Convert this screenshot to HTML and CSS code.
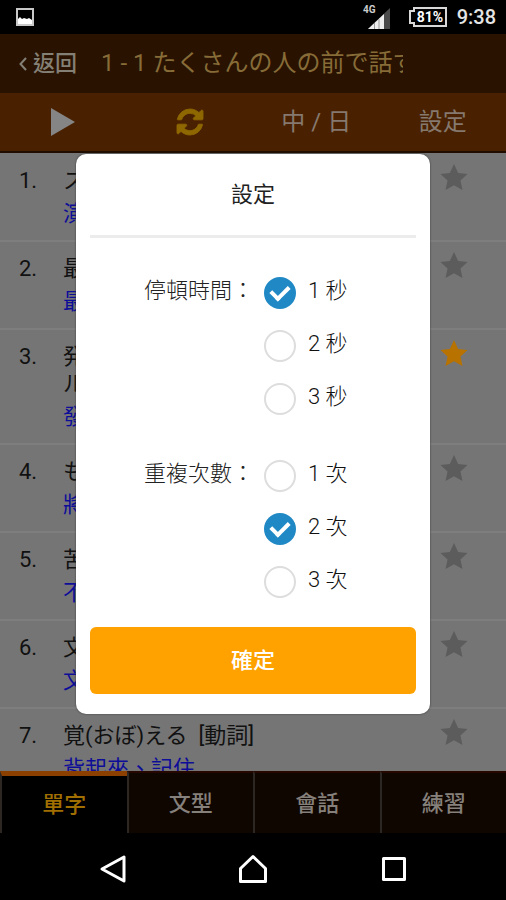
FILE: index.html
```html
<!DOCTYPE html>
<html lang="zh-Hant">
<head>
<meta charset="utf-8">
<meta name="viewport" content="width=device-width, initial-scale=1">
<title>設定</title>
<link rel="stylesheet" href="styles.css">
</head>
<body>
<svg class="sprite" aria-hidden="true">
  <symbol id="star" viewBox="0 0 28 28"><path d="M14 0 18.300 9.300 28 10.300 20.700 17 22.800 27 14 22 5.200 27 7.300 17 0 10.300 9.700 9.300Z"/></symbol>
</svg>
<div class="screen">
  <div class="status">
    <svg class="picture-icon" viewBox="0 0 18 18"><path d="M1 1h16v16H1z" fill="none" stroke="#c8c8c8" stroke-width="2"/><path d="M2 16v-5l2-2 2 2 2-1 3 1 2-1 3 2v4z" fill="#fff"/></svg>
    <div class="status-right">
      <svg class="signal" viewBox="0 0 28 26"><text x="0" y="9" class="net">4G</text><path d="M5 25 27 4v21z" fill="#4a4a4a"/><path d="M5 25 21 10v15z" fill="#eee"/><path d="M11.500 19v6M16 15v10" stroke="#999"/></svg>
      <svg class="battery" viewBox="0 0 38 20"><path d="M5 1h32v18H5v-3H1V4h4z" fill="none" stroke="#d8d8d8" stroke-width="2"/><text x="21" y="15" text-anchor="middle" class="level">81%</text></svg>
      <span class="clock">9:38</span>
    </div>
  </div>
  <header class="header">
    <button class="back" type="button"><svg viewBox="0 0 8 14"><path d="M7 1 1.500 7 7 13" fill="none" stroke="currentColor" stroke-width="2"/></svg>返回</button>
    <h1 class="title" lang="ja">1 - 1 たくさんの人の前で話す</h1>
  </header>
  <div class="toolbar">
    <button type="button" aria-label="播放"><svg class="play" viewBox="0 0 24 28"><path d="M0 0 24 14 0 28z" fill="#858585"/></svg></button>
    <button type="button" aria-label="重複"><svg class="repeat" viewBox="0 0 1536 1536"><path fill="#8e6700" stroke="#8e6700" stroke-width="50" d="M1511 928q0 5-1 7-64 268-268 434.500T764 1536q-146 0-282.500-55T238 1324l-129 129q-19 19-45 19t-45-19-19-45V960q0-26 19-45t45-19h448q26 0 45 19t19 45-19 45l-137 137q71 66 161 102t187 36q134 0 250-65t186-179q11-17 53-117 8-23 30-23h192q13 0 22.500 9.500t9.500 22.500zm25-800v448q0 26-19 45t-45 19h-448q-26 0-45-19t-19-45 19-45l138-138Q969 256 768 256q-134 0-250 65T332 500q-11 17-53 117-8 23-30 23H50q-13 0-22.500-9.500T18 608v-7q65-268 270-434.500T768 0q146 0 284 55.500T1297 212l130-129q19-19 45-19t45 19 19 45z"/></svg></button>
    <button type="button">中 / 日</button>
    <button type="button">設定</button>
  </div>
  <main class="content">
    <ol class="words">
      <li><span class="num">1.</span><div class="entry"><p lang="ja">スピーチ</p><p class="meaning">演講</p></div><button type="button" aria-label="收藏"><svg><use href="#star"/></svg></button></li>
      <li><span class="num">2.</span><div class="entry"><p lang="ja">最初</p><p class="meaning">最初</p></div><button type="button" aria-label="收藏"><svg><use href="#star"/></svg></button></li>
      <li><span class="num">3.</span><div class="entry"><p lang="ja">発表スキ<br>ル</p><p class="meaning">發表技巧</p></div><button type="button" class="on" aria-label="收藏"><svg><use href="#star"/></svg></button></li>
      <li><span class="num">4.</span><div class="entry"><p lang="ja">もうすぐ</p><p class="meaning">將要</p></div><button type="button" aria-label="收藏"><svg><use href="#star"/></svg></button></li>
      <li><span class="num">5.</span><div class="entry"><p lang="ja">苦手</p><p class="meaning">不擅長</p></div><button type="button" aria-label="收藏"><svg><use href="#star"/></svg></button></li>
      <li><span class="num">6.</span><div class="entry"><p lang="ja">文章</p><p class="meaning">文章</p></div><button type="button" aria-label="收藏"><svg><use href="#star"/></svg></button></li>
      <li><span class="num">7.</span><div class="entry"><p lang="ja">覚(おぼ)える&nbsp; [動詞]</p><p class="meaning">背起來、記住</p></div><button type="button" aria-label="收藏"><svg><use href="#star"/></svg></button></li>
    </ol>
  </main>
  <nav class="tabs">
    <a href="#words" class="active">單字</a><a href="#grammar">文型</a><a href="#talk">會話</a><a href="#practice">練習</a>
  </nav>
  <div class="system">
    <button type="button" aria-label="返回"><svg viewBox="0 0 28 30"><path d="M3 15 25 3v24z"/></svg></button>
    <button type="button" aria-label="主畫面"><svg viewBox="0 0 28 30"><path d="M1.500 27.500V14.500L14 2.500l12.500 12v13z"/></svg></button>
    <button type="button" aria-label="最近"><svg viewBox="0 0 28 30"><path d="M4.500 4.500h21v21h-21z"/></svg></button>
  </div>
  <form class="dialog" role="dialog" aria-labelledby="dialog-title">
    <h2 id="dialog-title">設定</h2>
    <div class="group" role="radiogroup" aria-labelledby="pause">
      <span class="group-name" id="pause">停頓時間：</span>
      <div class="options">
        <label><input type="radio" name="pause" checked><span>1 秒</span></label>
        <label><input type="radio" name="pause"><span>2 秒</span></label>
        <label><input type="radio" name="pause"><span>3 秒</span></label>
      </div>
    </div>
    <div class="group" role="radiogroup" aria-labelledby="times">
      <span class="group-name" id="times">重複次數：</span>
      <div class="options">
        <label><input type="radio" name="times"><span>1 次</span></label>
        <label><input type="radio" name="times" checked><span>2 次</span></label>
        <label><input type="radio" name="times"><span>3 次</span></label>
      </div>
    </div>
    <button class="confirm" type="button">確定</button>
  </form>
</div>
</body>
</html>
```
FILE: styles.css
```css
* { box-sizing: border-box; }
body {
  margin: 0;
  background: #000;
  font: 22px/27px Roboto, "Noto Sans CJK TC", sans-serif;
}
[lang="ja"] { font-family: Roboto, "Noto Sans CJK JP", sans-serif; }
h1, h2, p, ol { margin: 0; padding: 0; font-weight: 400; }
button {
  margin: 0;
  padding: 0;
  border: 0;
  background: none;
  color: inherit;
  font: inherit;
}
a { color: inherit; text-decoration: none; }
svg { display: block; }
.sprite { display: none; }
.screen {
  position: relative;
  display: flex;
  flex-direction: column;
  height: 100vh;
  overflow: hidden;
}

.status {
  display: flex;
  flex: none;
  align-items: center;
  justify-content: space-between;
  height: 34px;
  padding: 0 10px 0 16px;
  color: #e4e4e4;
}
.picture-icon { width: 18px; height: 18px; }
.status-right { display: flex; align-items: center; gap: 10px; }
.signal { width: 28px; height: 26px; margin-right: 8px; }
.battery { width: 38px; height: 20px; }
.net { fill: #ccc; font-size: 10px; font-weight: 700; }
.level { fill: #fff; font-size: 14px; font-weight: 700; }
.clock { font-size: 20px; font-weight: 500; }

.header {
  display: flex;
  flex: none;
  align-items: center;
  gap: 24px;
  height: 59px;
  padding-left: 19px;
  background: #291300;
}
.back {
  display: flex;
  align-items: center;
  gap: 6px;
  color: #858076;
  font-weight: 500;
}
.back svg { width: 8px; height: 14px; }
.title {
  width: 62%;
  overflow: hidden;
  color: #876c38;
  font-size: 24px;
  white-space: nowrap;
}

.toolbar {
  display: grid;
  flex: none;
  grid-template-columns: repeat(4, 1fr);
  height: 60px;
  border-bottom: 2px solid #200d00;
  background: #4a2100;
  color: #85796f;
  font-size: 24px;
}
.toolbar button { display: flex; align-items: center; justify-content: center; }
.play { width: 24px; height: 28px; }
.repeat { width: 26px; height: 26px; overflow: visible; }

.content { flex: 1; min-height: 0; overflow: hidden; background: #757575; }
.words { padding-top: 1px; list-style: none; }
.words li {
  display: flex;
  padding: 13px 38px 13px 19px;
  border-bottom: 2px solid #7e7e7e;
  color: #111;
}
.num { width: 44px; }
.entry { flex: 1; }
.meaning { margin-top: 6px; color: #0d0d98; }
.words button { align-self: flex-start; margin-top: -3px; color: #5c5c5c; }
.words button.on { color: #b87200; }
.words svg { width: 28px; height: 27px; fill: currentColor; }

.tabs {
  display: grid;
  flex: none;
  grid-template-columns: repeat(4, 1fr);
  height: 62px;
  background: #100600;
  color: #85807b;
  font-weight: 500;
}
.tabs a {
  display: flex;
  align-items: center;
  justify-content: center;
  border-top: 2px solid #260800;
  border-left: 2px solid #2c2722;
}
.tabs .active {
  border-top: 5px solid #8c4000;
  background: #000;
  color: #a06f00;
}

.system {
  display: flex;
  flex: none;
  align-items: center;
  justify-content: center;
  gap: 112px;
  height: 67px;
  padding-top: 4px;
}
.system svg {
  width: 28px;
  height: 30px;
  fill: none;
  stroke: #fff;
  stroke-width: 3;
  stroke-linejoin: round;
}

.dialog {
  position: absolute;
  top: 154px;
  left: 15%;
  width: 70%;
  padding: 0 14px 20px;
  border-radius: 10px;
  background: #fff;
  color: #222;
  font-weight: 300;
  box-shadow: 0 0 2px #333;
}
.dialog h2 {
  margin-bottom: 27px;
  padding: 27px 0;
  border-bottom: 3px solid #ececec;
  font-size: 22px;
  text-align: center;
}
.group { display: flex; margin-bottom: 24px; padding-left: 54px; }
.group:last-of-type { margin-bottom: 20px; }
.group-name { width: 120px; padding-top: 12px; white-space: nowrap; }
.options label { display: flex; gap: 12px; height: 53px; padding-top: 12px; color: #111; }
.options input {
  width: 32px;
  height: 32px;
  margin: 0;
  border: 2px solid #ddd;
  border-radius: 50%;
  background: #fff;
  appearance: none;
}
.options input:checked { display: grid; place-items: center; border-color: #2089c5; background: #2089c5; }
.options input:checked::before {
  content: "";
  width: 14px;
  height: 8px;
  margin-bottom: 4px;
  border: solid #fff;
  border-width: 0 0 4px 4px;
  transform: rotate(-45deg);
}
.confirm {
  width: 100%;
  height: 67px;
  border-radius: 6px;
  background: #ffa200;
  color: #fff;
  font-weight: 500;
}
```
